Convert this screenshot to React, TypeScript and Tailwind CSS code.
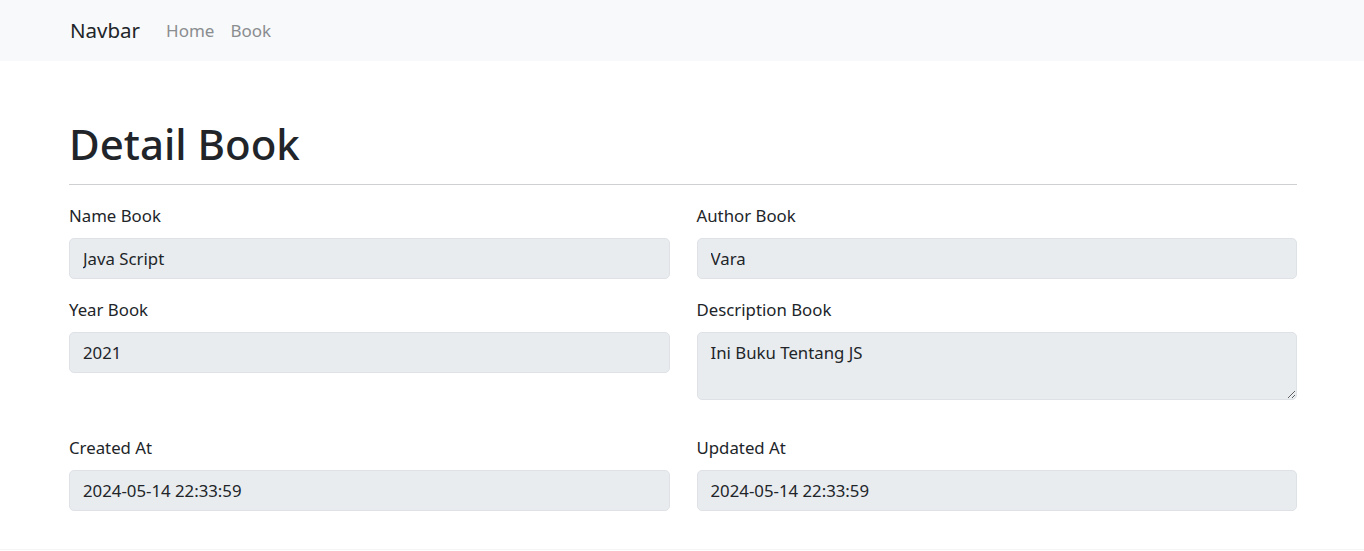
import React from "react";

const font = { fontFamily: '"Noto Sans", "Open Sans", sans-serif' };

function Field({ label, value }: { label: string; value: string }) {
  return (
    <div className="flex flex-col">
      <label className="text-[16.8px] leading-[26px] text-[#212529] mb-[9px]">{label}</label>
      <input
        readOnly
        value={value}
        className="h-[41px] w-full rounded-[5px] border border-[#dee2e6] bg-[#e9ecef] px-[13px] text-[16.8px] text-[#212529] outline-none"
        style={font}
      />
    </div>
  );
}

export default function App() {
  return (
    <div className="h-[550px] border-b border-[#f4f5f6] bg-white text-[#212529]" style={font}>
      <nav className="h-[61px] bg-[#f8f9fa] flex items-center">
        <div className="ml-[70px] flex items-center">
          <span className="text-[20.5px] text-[#212529] mr-[18px]">Navbar</span>
          <span className="text-[17px] text-[#8a8d90] pl-[8px] pr-[9px]">Home</span>
          <span className="text-[17px] text-[#8a8d90] px-[7px]">Book</span>
        </div>
      </nav>
      <div className="ml-[69px] w-[1228px]">
        <h1 className="mt-[56px] text-[42px] leading-[53px] font-medium text-[#212529]">Detail Book</h1>
        <hr className="mt-[14px] mb-[18px] border-0 border-t border-[#cfd0d1]" />
        <div className="grid grid-cols-2 gap-x-[27px]">
          <div className="mb-[18px]"><Field label="Name Book" value="Java Script" /></div>
          <div className="mb-[18px]"><Field label="Author Book" value="Vara" /></div>
          <div className="mb-[18px]"><Field label="Year Book" value="2021" /></div>
          <div className="mb-[18px] flex flex-col">
            <label className="text-[16.8px] leading-[26px] text-[#212529] mb-[9px]">Description Book</label>
            <textarea
              readOnly
              value="Ini Buku Tentang JS"
              className="h-[68px] w-full resize-y rounded-[5px] border border-[#dee2e6] bg-[#e9ecef] px-[13px] py-[7px] text-[16.8px] leading-[26px] text-[#212529] outline-none"
              style={font}
            />
          </div>
          <div className="mt-[17px]"><Field label="Created At" value="2024-05-14 22:33:59" /></div>
          <div className="mt-[17px]"><Field label="Updated At" value="2024-05-14 22:33:59" /></div>
        </div>
      </div>
    </div>
  );
}
